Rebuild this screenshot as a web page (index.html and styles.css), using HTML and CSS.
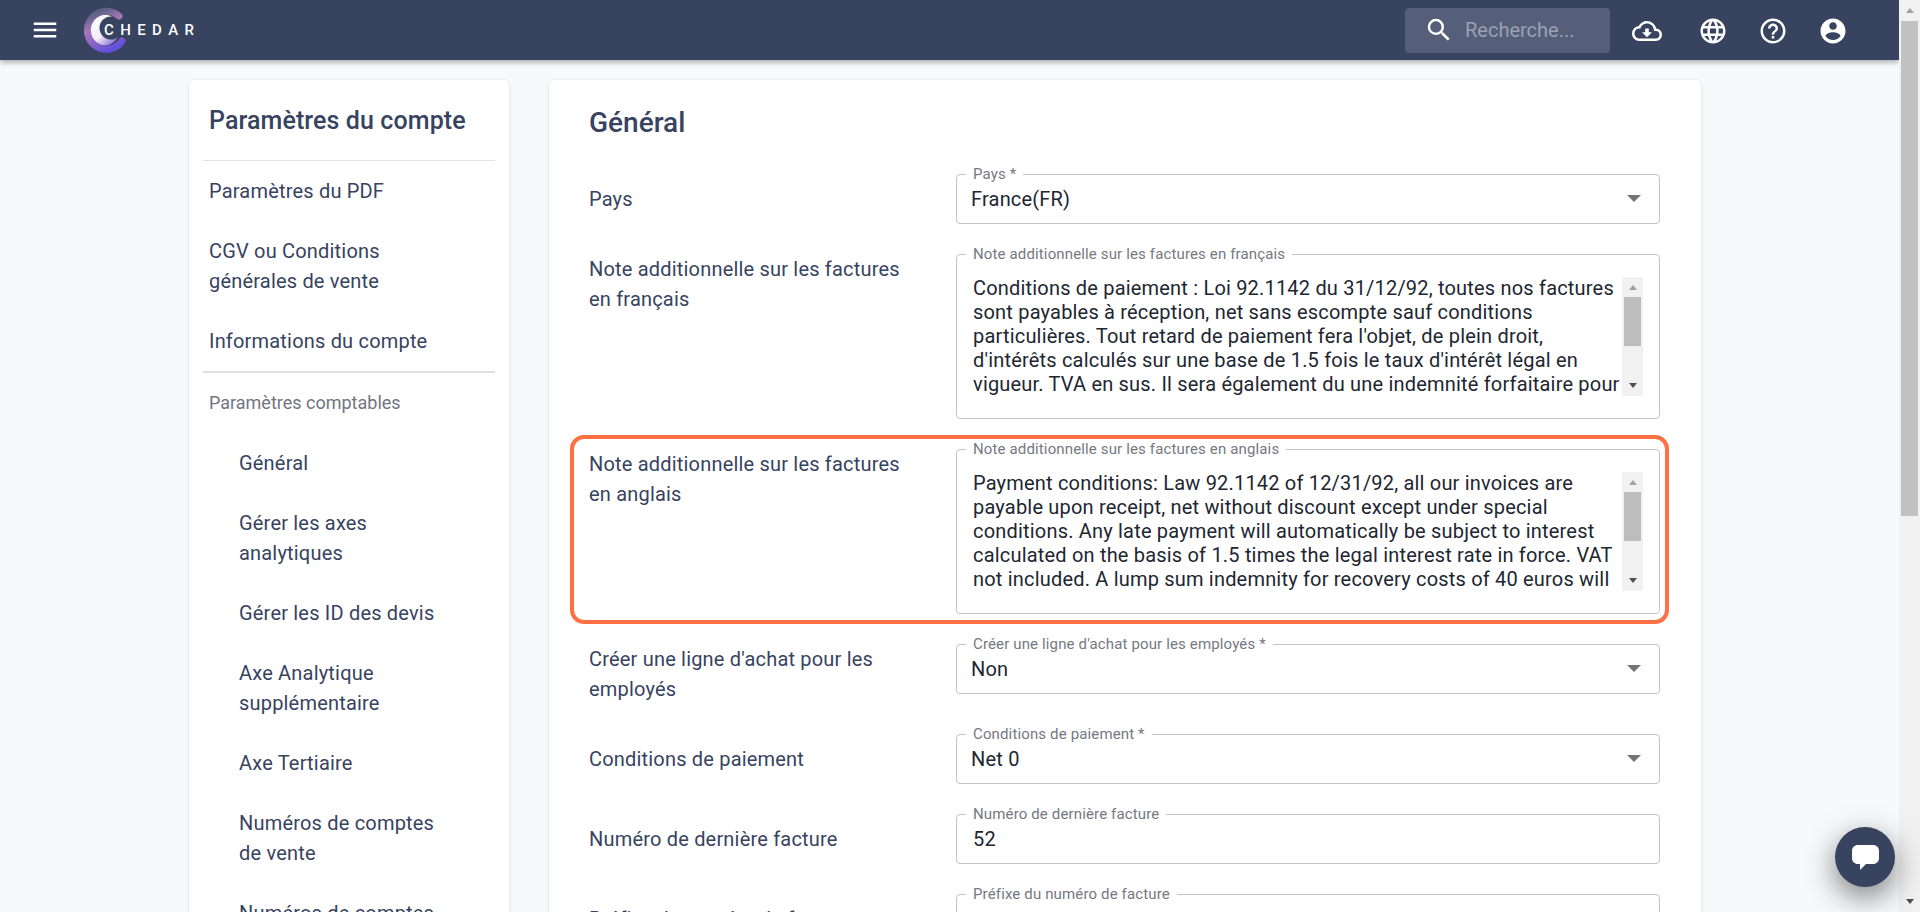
FILE: index.html
```html
<!DOCTYPE html>
<html lang="fr">
<head>
    <meta charset="UTF-8">
    <meta name="viewport" content="width=device-width, initial-scale=1.0">
    <title>Chedar - Paramètres du compte</title>
    <link rel="stylesheet" href="styles.css">
</head>
<body>

<div class="page">
    <header class="topbar">
        <div class="topbar-left">
            <svg class="menu-icon" viewBox="0 0 24 24"><path d="M3 18h18v-2H3v2zm0-5h18v-2H3v2zm0-7v2h18V6H3z"/></svg>
            <div class="logo">
                <svg class="logo-mark" viewBox="0 0 46 46">
                    <defs>
                        <linearGradient id="ringGrad" x1="0.3" y1="0" x2="0.7" y2="1">
                            <stop offset="0" stop-color="#56607f"/>
                            <stop offset="0.35" stop-color="#a678b8"/>
                            <stop offset="0.7" stop-color="#8a62c8"/>
                            <stop offset="1" stop-color="#6450dc"/>
                        </linearGradient>
                        <linearGradient id="glowGrad" x1="0.1" y1="0.1" x2="0.9" y2="0.9">
                            <stop offset="0" stop-color="#ffffff"/>
                            <stop offset="0.55" stop-color="#f3ecf6"/>
                            <stop offset="1" stop-color="#8468d8"/>
                        </linearGradient>
                    </defs>
                    <circle cx="22" cy="23" r="15.500" fill="url(#glowGrad)"/>
                    <circle cx="29" cy="21" r="11.500" fill="#37435f"/>
                    <path d="M37 9A19 19 0 1 0 40 34" fill="none" stroke="url(#ringGrad)" stroke-width="7" stroke-linecap="round"/>
                </svg>
                <span class="logo-text">CHEDAR</span>
            </div>
        </div>
        <div class="topbar-right">
            <div class="search">
                <svg class="search-icon" viewBox="0 0 24 24"><path d="M15.500 14h-.79l-.28-.27A6.470 6.470 0 0 0 16 9.500 6.500 6.500 0 1 0 9.500 16c1.610 0 3.090-.59 4.230-1.570l.27.28v.79l5 4.990L20.490 19l-4.990-5zm-6 0C7.010 14 5 11.990 5 9.500S7.010 5 9.500 5 14 7.010 14 9.500 11.990 14 9.500 14z"/></svg>
                <span class="search-text">Recherche...</span>
            </div>
            <svg class="top-icon cloud" viewBox="0 0 24 24"><path d="M19.350 10.040A7.490 7.490 0 0 0 12 4C9.110 4 6.600 5.640 5.350 8.040A5.994 5.994 0 0 0 0 14c0 3.310 2.690 6 6 6h13c2.760 0 5-2.240 5-5 0-2.640-2.050-4.780-4.650-4.960zM19 18H6c-2.210 0-4-1.790-4-4 0-2.050 1.530-3.760 3.560-3.970l1.070-.11.500-.95A5.469 5.469 0 0 1 12 6c2.620 0 4.880 1.860 5.390 4.430l.3 1.500 1.530.11A2.980 2.980 0 0 1 22 15c0 1.650-1.350 3-3 3zm-5.550-8h-2.900v3H8l4 4 4-4h-2.550z"/></svg>
            <svg class="top-icon globe" viewBox="0 0 24 24"><path d="M11.990 2C6.470 2 2 6.480 2 12s4.470 10 9.990 10C17.520 22 22 17.520 22 12S17.520 2 11.990 2zm6.930 6h-2.950a15.650 15.650 0 0 0-1.380-3.560A8.030 8.030 0 0 1 18.920 8zM12 4.040c.83 1.200 1.480 2.530 1.910 3.960h-3.820c.43-1.430 1.080-2.760 1.910-3.960zM4.260 14C4.100 13.360 4 12.690 4 12s.1-1.360.26-2h3.380c-.08.660-.14 1.320-.14 2s.06 1.340.14 2H4.260zm.82 2h2.950c.32 1.250.78 2.450 1.380 3.560A7.987 7.987 0 0 1 5.080 16zm2.950-8H5.080a7.987 7.987 0 0 1 4.330-3.560A15.650 15.650 0 0 0 8.030 8zM12 19.960c-.83-1.200-1.480-2.530-1.910-3.960h3.820c-.43 1.430-1.080 2.760-1.910 3.960zM14.340 14H9.660c-.09-.66-.16-1.320-.16-2s.07-1.350.16-2h4.680c.09.650.16 1.320.16 2s-.07 1.340-.16 2zm.25 5.560c.6-1.110 1.060-2.310 1.380-3.560h2.950a8.030 8.030 0 0 1-4.330 3.560zM16.360 14c.08-.66.14-1.320.14-2s-.06-1.340-.14-2h3.380c.16.640.26 1.310.26 2s-.1 1.360-.26 2h-3.380z"/></svg>
            <svg class="top-icon" viewBox="0 0 24 24"><path d="M11 18h2v-2h-2v2zm1-16C6.480 2 2 6.480 2 12s4.480 10 10 10 10-4.480 10-10S17.520 2 12 2zm0 18c-4.410 0-8-3.590-8-8s3.590-8 8-8 8 3.590 8 8-3.590 8-8 8zm0-14c-2.210 0-4 1.790-4 4h2c0-1.100.9-2 2-2s2 .9 2 2c0 2-3 1.750-3 5h2c0-2.250 3-2.500 3-5 0-2.210-1.790-4-4-4z"/></svg>
            <svg class="top-icon" viewBox="0 0 24 24"><path d="M12 2C6.480 2 2 6.480 2 12s4.480 10 10 10 10-4.480 10-10S17.520 2 12 2zm0 3c1.660 0 3 1.340 3 3s-1.340 3-3 3-3-1.340-3-3 1.340-3 3-3zm0 14.200a7.200 7.200 0 0 1-6-3.220c.03-1.990 4-3.080 6-3.080 1.990 0 5.970 1.090 6 3.080a7.200 7.200 0 0 1-6 3.220z"/></svg>
        </div>
    </header>

    <div class="content">
        <aside class="sidebar card">
            <h2 class="sidebar-title">Paramètres du compte</h2>
            <nav class="side-nav">
                <a>Paramètres du PDF</a>
                <a>CGV ou Conditions générales de vente</a>
                <a class="last">Informations du compte</a>
                <div class="side-head">Paramètres comptables</div>
                <a class="sub">Général</a>
                <a class="sub">Gérer les axes analytiques</a>
                <a class="sub">Gérer les ID des devis</a>
                <a class="sub">Axe Analytique supplémentaire</a>
                <a class="sub">Axe Tertiaire</a>
                <a class="sub">Numéros de comptes de vente</a>
                <a class="sub">Numéros de comptes d'achat</a>
            </nav>
        </aside>

        <main class="main card">
            <h1 class="main-title">Général</h1>

            <div class="row">
                <div class="row-label">Pays</div>
                <div class="field field-select">
                    <span class="field-label">Pays *</span>
                    <span class="field-value">France(FR)</span>
                    <span class="caret"></span>
                </div>
            </div>

            <div class="row row-top">
                <div class="row-label">Note additionnelle sur les factures en français</div>
                <div class="field field-area">
                    <span class="field-label">Note additionnelle sur les factures en français</span>
                    <div class="area-text">Conditions de paiement : Loi 92.1142 du 31/12/92, toutes nos factures sont payables à réception, net sans escompte sauf conditions particulières. Tout retard de paiement fera l'objet, de plein droit, d'intérêts calculés sur une base de 1.5 fois le taux d'intérêt légal en vigueur. TVA en sus. Il sera également du une indemnité forfaitaire pour</div>
                    <div class="mini-bar"><span class="up"></span><span class="thumb"></span><span class="down"></span></div>
                </div>
            </div>

            <div class="row row-top row-marked">
                <div class="row-label">Note additionnelle sur les factures en anglais</div>
                <div class="field field-area">
                    <span class="field-label">Note additionnelle sur les factures en anglais</span>
                    <div class="area-text">Payment conditions: Law 92.1142 of 12/31/92, all our invoices are payable upon receipt, net without discount except under special conditions. Any late payment will automatically be subject to interest calculated on the basis of 1.5 times the legal interest rate in force. VAT not included. A lump sum indemnity for recovery costs of 40 euros will</div>
                    <div class="mini-bar"><span class="up"></span><span class="thumb"></span><span class="down"></span></div>
                </div>
            </div>

            <div class="row row-top">
                <div class="row-label">Créer une ligne d'achat pour les employés</div>
                <div class="field field-select">
                    <span class="field-label">Créer une ligne d'achat pour les employés *</span>
                    <span class="field-value">Non</span>
                    <span class="caret"></span>
                </div>
            </div>

            <div class="row">
                <div class="row-label">Conditions de paiement</div>
                <div class="field field-select">
                    <span class="field-label">Conditions de paiement *</span>
                    <span class="field-value">Net 0</span>
                    <span class="caret"></span>
                </div>
            </div>

            <div class="row">
                <div class="row-label">Numéro de dernière facture</div>
                <div class="field">
                    <span class="field-label">Numéro de dernière facture</span>
                    <span class="field-value">52</span>
                </div>
            </div>

            <div class="row">
                <div class="row-label">Préfixe du numéro de facture</div>
                <div class="field">
                    <span class="field-label">Préfixe du numéro de facture</span>
                </div>
            </div>
        </main>
    </div>
</div>

<div class="page-scroll"><span class="up"></span><span class="thumb"></span><span class="down"></span></div>

<button class="chat-btn">
    <svg viewBox="0 0 27 25"><path d="M6 0h15c3.500 0 6 2.500 6 6v7c0 3.500-2.500 6-6 6h-7l-6 6v-6H6c-3.500 0-6-2.500-6-6V6c0-3.500 2.500-6 6-6z"/></svg>
</button>

</body>
</html>
```

FILE: styles.css
```css
html, body {
    margin: 0;
    padding: 0;
    height: 912px;
    overflow: hidden;
}

body {
    background-color: #f8f9fb;
    font-family: Roboto, "Liberation Sans", sans-serif;
    color: #37435f;
    display: flex;
}

.page {
    flex: 1;
    min-width: 0;
    height: 912px;
    overflow: hidden;
}

/* top bar */
.topbar {
    height: 60px;
    background-color: #37435f;
    box-shadow: 0 2px 6px rgba(0, 0, 0, 0.35);
    display: flex;
    justify-content: space-between;
    align-items: center;
    position: relative;
    z-index: 2;
}

.topbar-left {
    display: flex;
    align-items: center;
    padding-left: 30px;
}

.menu-icon {
    width: 30px;
    height: 30px;
    fill: #fff;
}

.logo {
    display: flex;
    align-items: center;
    margin-left: 22px;
}

.logo-mark {
    width: 46px;
    height: 46px;
}

.logo-text {
    color: #fff;
    font-size: 15px;
    font-weight: 500;
    letter-spacing: 6.400px;
    margin-left: -24px;
    position: relative;
}

.topbar-right {
    display: flex;
    align-items: center;
    padding-right: 51px;
}

.search {
    width: 205px;
    height: 45px;
    border-radius: 4px;
    background-color: #555f7a;
    display: flex;
    align-items: center;
    margin-right: 22px;
}

.search-icon {
    width: 30px;
    height: 30px;
    fill: #fff;
    margin-left: 19px;
}

.search-text {
    color: #9aa1b2;
    font-size: 20px;
    margin-left: 11px;
}

.top-icon {
    width: 30px;
    height: 30px;
    fill: #fff;
    margin-left: 30px;
    margin-top: 2px;
}

.top-icon.cloud {
    margin-left: 0;
}

.top-icon.globe {
    margin-left: 36px;
}

/* cards */
.content {
    display: flex;
    gap: 40px;
    padding: 20px 0 0 189px;
    align-items: flex-start;
}

.card {
    background: #fff;
    border-radius: 6px;
    box-shadow: 0 1px 4px rgba(0, 0, 0, 0.12);
}

.sidebar {
    width: 320px;
    flex-shrink: 0;
    padding: 25px 14px 40px 14px;
    box-sizing: border-box;
}

.sidebar-title {
    font-size: 25px;
    font-weight: 500;
    letter-spacing: 0.100px;
    line-height: 32px;
    margin: 0;
    padding: 0 6px 23px;
    border-bottom: 1px solid #e2e2e2;
}

.side-nav a {
    display: block;
    font-size: 20px;
    letter-spacing: 0.190px;
    line-height: 30px;
    padding: 15px 40px 15px 6px;
}

.side-nav a.last {
    border-bottom: 2px solid #e0e0e0;
}

.side-nav a.sub {
    padding-left: 36px;
}

.side-head {
    color: #72757f;
    font-size: 18px;
    line-height: 30px;
    padding: 15px 6px;
}

.main {
    width: 1152px;
    flex-shrink: 0;
    padding: 25px 41px 40px 40px;
    box-sizing: border-box;
}

.main-title {
    font-size: 28px;
    font-weight: 500;
    line-height: 36px;
    margin: 0 0 33px;
}

/* form rows */
.row {
    display: flex;
    justify-content: space-between;
    align-items: flex-start;
    margin-bottom: 30px;
}

.row-label {
    width: 330px;
    font-size: 20px;
    letter-spacing: 0.190px;
    line-height: 30px;
    padding-top: 10px;
}

.row-top .row-label {
    padding-top: 0;
}

.field {
    width: 704px;
    height: 50px;
    box-sizing: border-box;
    border: 1px solid #c4c4c4;
    border-radius: 4px;
    position: relative;
    padding: 0 16px;
    display: flex;
    align-items: center;
}

.field-select {
    padding-left: 14px;
}

.field-label {
    position: absolute;
    top: -8px;
    left: 9px;
    background: #fff;
    padding: 0 7px;
    color: #76787f;
    font-size: 15px;
    letter-spacing: 0.140px;
    line-height: 15px;
}

.field-value {
    color: #212631;
    font-size: 20px;
    letter-spacing: 0.190px;
}

.caret {
    position: absolute;
    right: 18px;
    top: 20px;
    border-left: 7px solid transparent;
    border-right: 7px solid transparent;
    border-top: 7px solid #757575;
}

.field-area {
    height: 165px;
    display: block;
    padding: 21px 0 0 16px;
}

.area-text {
    width: 648px;
    height: 119px;
    overflow: hidden;
    color: #212631;
    font-size: 20px;
    letter-spacing: 0.190px;
    line-height: 24px;
}

.mini-bar {
    position: absolute;
    right: 16px;
    top: 22px;
    width: 21px;
    height: 119px;
    background: #f1f1f1;
    display: flex;
    flex-direction: column;
    align-items: center;
}

.mini-bar .thumb {
    width: 17px;
    height: 49px;
    background: #bdbdbd;
    margin-top: 3px;
}

.up, .down {
    display: block;
    width: 0;
    height: 0;
    border-left: 4.500px solid transparent;
    border-right: 4.500px solid transparent;
}

.up {
    border-bottom: 5px solid #a3a3a3;
    margin-top: 8px;
    margin-bottom: 4px;
}

.down {
    border-top: 5px solid #505050;
    margin-top: auto;
    margin-bottom: 8px;
}

/* orange highlight round the english note */
.row-marked {
    position: relative;
}

.row-marked::before {
    content: "";
    position: absolute;
    top: -14px;
    bottom: -10px;
    left: -19px;
    right: -9px;
    border: 4px solid #ff7043;
    border-radius: 14px;
    pointer-events: none;
}

/* window scrollbar */
.page-scroll {
    width: 21px;
    height: 912px;
    flex-shrink: 0;
    background: #f1f1f1;
    display: flex;
    flex-direction: column;
    align-items: center;
}

.page-scroll .thumb {
    width: 17px;
    height: 495px;
    background: #c1c1c1;
    margin-top: 4px;
}

/* chat button */
.chat-btn {
    position: fixed;
    right: 25px;
    bottom: 25px;
    width: 60px;
    height: 60px;
    border: none;
    border-radius: 50%;
    padding: 0;
    background: #37435f;
    box-shadow: 0 10px 30px rgba(0, 0, 0, 0.5);
    display: flex;
    align-items: center;
    justify-content: center;
}

.chat-btn svg {
    width: 27px;
    height: 25px;
    fill: #fff;
}
```
